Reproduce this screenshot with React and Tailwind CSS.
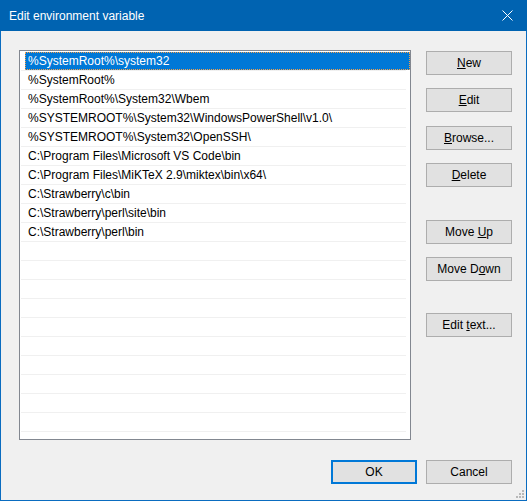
import React from "react";

const entries = [
  "%SystemRoot%\\system32",
  "%SystemRoot%",
  "%SystemRoot%\\System32\\Wbem",
  "%SYSTEMROOT%\\System32\\WindowsPowerShell\\v1.0\\",
  "%SYSTEMROOT%\\System32\\OpenSSH\\",
  "C:\\Program Files\\Microsoft VS Code\\bin",
  "C:\\Program Files\\MiKTeX 2.9\\miktex\\bin\\x64\\",
  "C:\\Strawberry\\c\\bin",
  "C:\\Strawberry\\perl\\site\\bin",
  "C:\\Strawberry\\perl\\bin",
];

const rows = [...entries, ...Array(11).fill("")];

function Btn({ children, className = "", primary = false }) {
  return (
    <div
      className={
        "h-[24px] w-[86px] flex items-center justify-center bg-[#e1e1e1] text-[12px] text-black leading-none " +
        (primary ? "border-2 border-[#0078d7] " : "border border-[#adadad] ") +
        className
      }
    >
      <span>{children}</span>
    </div>
  );
}

export default function App() {
  return (
    <div
      className="w-[527px] h-[501px] flex flex-col bg-[#0a6cc0] overflow-hidden"
      style={{ fontFamily: '"Liberation Sans", Arial, sans-serif' }}
    >
      <div className="h-[31px] flex items-center justify-between pl-[9px] pr-[14px] bg-[#0063b1] text-white text-[12px]">
        <span>Edit environment variable</span>
        <svg width="11" height="11" viewBox="0 0 11 11">
          <path d="M0.5 0.5 L10.5 10.5 M10.5 0.5 L0.5 10.5" stroke="#ffffff" strokeWidth="1" />
        </svg>
      </div>
      <div className="relative flex-1 mx-px mb-px bg-[#f0f0f0] flex flex-col pt-[19px] pl-[18px] pr-[14px]">
        <div className="flex">
          <div className="w-[392px] h-[390px] border border-[#828790] bg-white pt-px overflow-hidden">
            {rows.map((t, i) => (
              <div key={i} className="flex flex-col">
                <div className="h-[18px] pl-[5px] flex">
                  {i === 0 ? (
                    <div className="flex-1 bg-[#0078d7] border border-dotted border-[#f7a048] flex items-center pl-[2px] text-white text-[12px] whitespace-nowrap">
                      {t}
                    </div>
                  ) : (
                    <div className="flex-1 flex items-center pl-[3px] text-black text-[12px] whitespace-nowrap">
                      {t}
                    </div>
                  )}
                </div>
                <div className="h-px ml-px w-[385px] bg-[#f0f0f0]" />
              </div>
            ))}
          </div>
          <div className="ml-[15px] pt-px flex flex-col">
            <Btn><u>N</u>ew</Btn>
            <Btn className="mt-[13px]"><u>E</u>dit</Btn>
            <Btn className="mt-[14px]"><u>B</u>rowse...</Btn>
            <Btn className="mt-[13px]"><u>D</u>elete</Btn>
            <Btn className="mt-[33px]">Move <u>U</u>p</Btn>
            <Btn className="mt-[13px]">Move D<u>o</u>wn</Btn>
            <Btn className="mt-[32px]">Edit <u>t</u>ext...</Btn>
          </div>
        </div>
        <div className="flex justify-end gap-[9px] mt-[20px]">
          <Btn primary>OK</Btn>
          <Btn>Cancel</Btn>
        </div>
        <svg className="absolute right-[2px] bottom-[2px]" width="8" height="8" viewBox="0 0 8 8">
          <rect x="6" y="0" width="2" height="2" fill="#b8b8b8" />
          <rect x="3" y="3" width="2" height="2" fill="#b8b8b8" />
          <rect x="6" y="3" width="2" height="2" fill="#b8b8b8" />
          <rect x="0" y="6" width="2" height="2" fill="#b8b8b8" />
          <rect x="3" y="6" width="2" height="2" fill="#b8b8b8" />
          <rect x="6" y="6" width="2" height="2" fill="#b8b8b8" />
        </svg>
      </div>
    </div>
  );
}
